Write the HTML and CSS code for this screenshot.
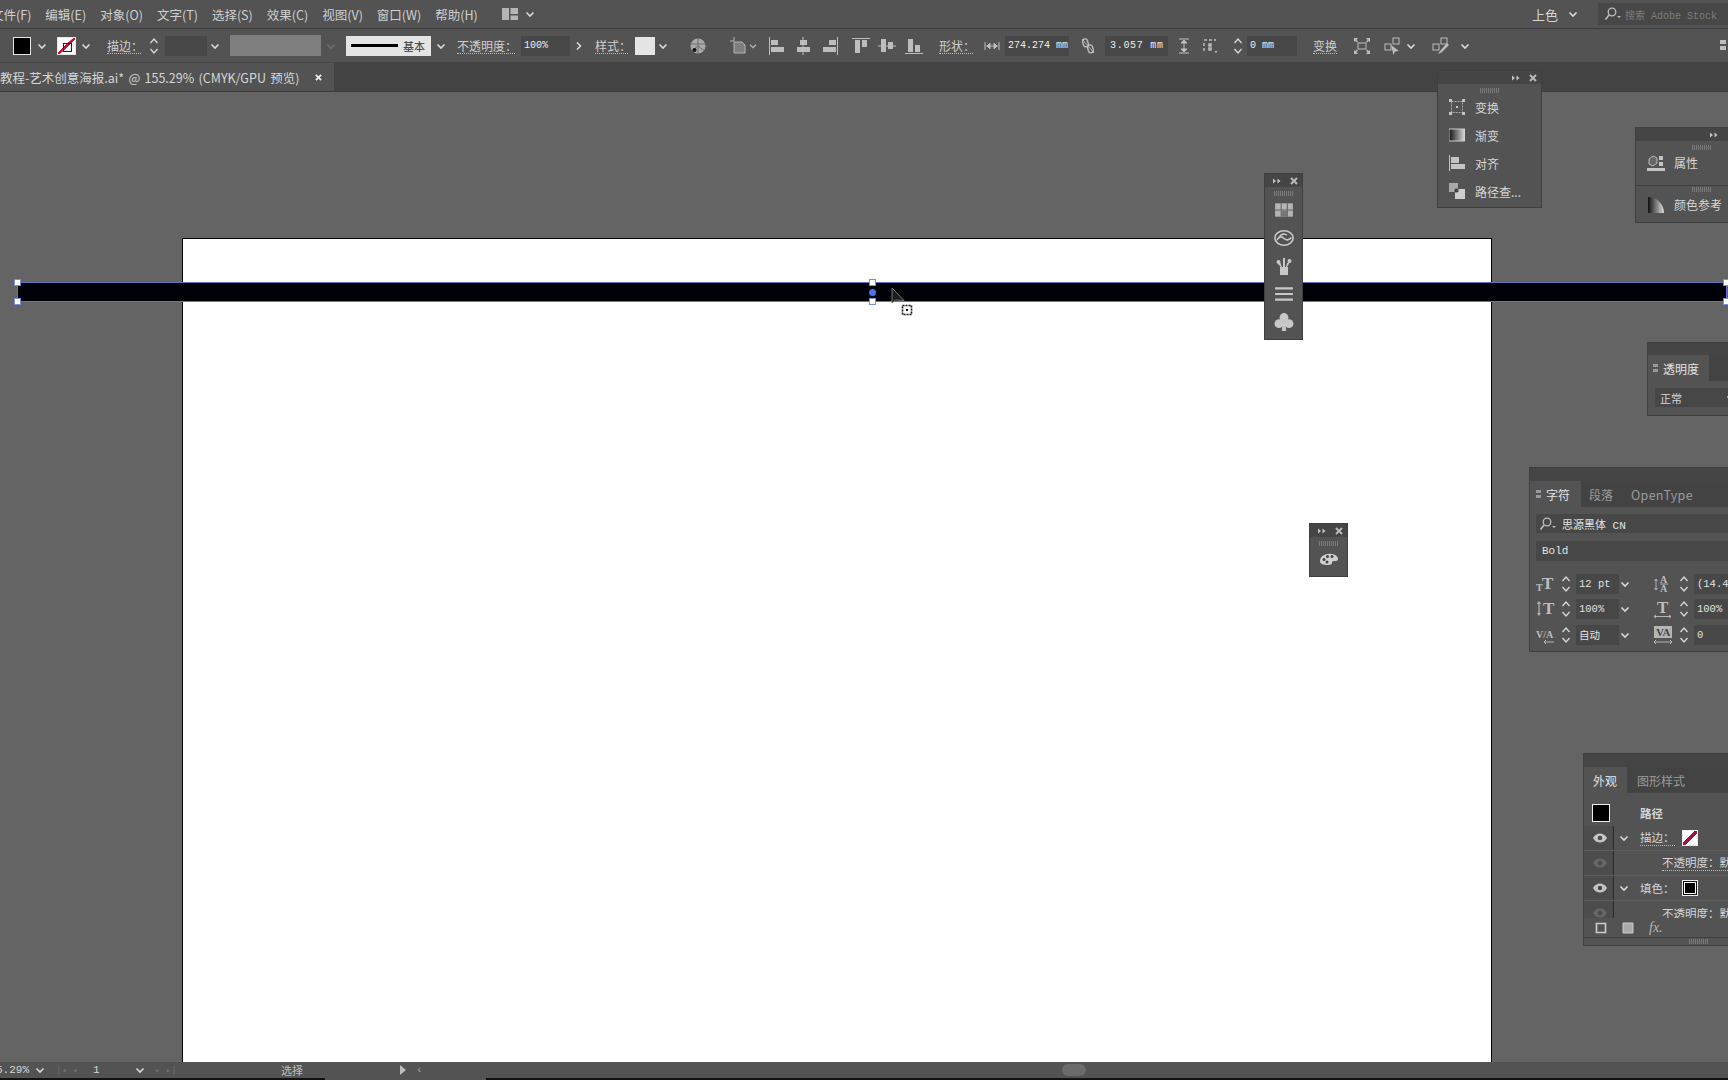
FILE: index.html
```html
<!DOCTYPE html>
<html lang="zh-CN">
  <head>
    <meta charset="UTF-8">
    <title>教程-艺术创意海报.ai</title>
    <link rel="stylesheet" href="styles.css">
  </head>
  <body>
    <svg class="sprite" aria-hidden="true">
      <defs>
        <linearGradient id="grad-h"><stop offset="0" stop-color="#111"/><stop offset="1" stop-color="#ddd"/></linearGradient>
        <symbol id="chev" viewBox="0 0 12 12"><path d="M2.5 4.5 6 8l3.5-3.5" fill="none" stroke="currentColor" stroke-width="1.6"/></symbol>
        <symbol id="step" viewBox="0 0 12 20"><path d="M2.5 7 6 3l3.500 4M2.500 13 6 17l3.500-4" fill="none" stroke="currentColor" stroke-width="1.300"/></symbol>
        <symbol id="collapse" viewBox="0 0 10 8"><path d="M1 1.500 4 4 1 6.500zM5.500 1.500 8.500 4l-3 2.500z" fill="currentColor"/></symbol>
        <symbol id="close" viewBox="0 0 8 8"><path d="M1 1l6 6M7 1 1 7" stroke="currentColor" stroke-width="2"/></symbol>
        <symbol id="align-l" viewBox="0 0 18 18"><path d="M1 0h1v18H1zM3 3h7v5H3zM3 10h13v5H3z" fill="currentColor"/></symbol>
        <symbol id="align-c" viewBox="0 0 18 18"><path d="M8.500 0h1v18h-1zM6 3h7v5H6zM3 10h13v5H3z" fill="currentColor"/></symbol>
        <symbol id="align-r" viewBox="0 0 18 18"><path d="M16 0h1v18h-1zM8 3h7v5H8zM2 10h13v5H2z" fill="currentColor"/></symbol>
        <symbol id="align-t" viewBox="0 0 18 18"><path d="M0 1h18v1H0zM3 3h5v13H3zM10 3h5v7h-5z" fill="currentColor"/></symbol>
        <symbol id="align-m" viewBox="0 0 18 18"><path d="M0 8.500h18v1H0zM3 2h5v13H3zM10 5h5v7h-5z" fill="currentColor"/></symbol>
        <symbol id="align-b" viewBox="0 0 18 18"><path d="M0 16h18v1H0zM3 2h5v13H3zM10 8h5v7h-5z" fill="currentColor"/></symbol>
        <symbol id="eye" viewBox="0 0 14 10"><path d="M0 5c3-6 11-6 14 0-3 6-11 6-14 0z" fill="currentColor"/><circle cx="7" cy="5" r="2.300" fill="#4a4a4a"/></symbol>
        <symbol id="lens" viewBox="0 0 18 14"><circle cx="8" cy="5" r="3.800" fill="none" stroke="currentColor" stroke-width="1.300"/><path d="M5 8 1.500 12.500" stroke="currentColor" stroke-width="1.600"/><path d="M13 9h4l-2 2z" fill="currentColor"/></symbol>
      </defs>
    </svg>

    <div class="app">
      <header class="menubar">
        <nav class="menu">
          <span>文件(F)</span><span>编辑(E)</span><span>对象(O)</span><span>文字(T)</span><span>选择(S)</span>
          <span>效果(C)</span><span>视图(V)</span><span>窗口(W)</span><span>帮助(H)</span>
        </nav>
        <svg class="layout-icon" viewBox="0 0 16 12"><path d="M0 0h7v12H0zM8.500 0H16v6H8.500zM8.500 7.500H16V12H8.500z" fill="#b5b5b5"/></svg>
        <svg class="chev layout-chev"><use href="#chev"/></svg>
        <div class="workspace-switch">
          <span>上色</span>
          <svg class="chev"><use href="#chev"/></svg>
        </div>
        <div class="stock-search">
          <svg class="lens"><use href="#lens"/></svg>
          <span>搜索 Adobe Stock</span>
        </div>
      </header>

      <div class="controlbar">
        <span class="swatch swatch-fill"></span>
        <svg class="chev ml5"><use href="#chev"/></svg>
        <span class="swatch swatch-none ml9"></span>
        <svg class="chev ml4"><use href="#chev"/></svg>
        <span class="label w34 ml15">描边：</span>
        <svg class="step ml7"><use href="#step"/></svg>
        <span class="field w42 ml5"></span>
        <svg class="chev ml2"><use href="#chev"/></svg>
        <span class="gray-box ml9"></span>
        <svg class="chev chev-dim ml4"><use href="#chev"/></svg>
        <span class="stroke-pref ml9"><i></i>基本</span>
        <svg class="chev ml4"><use href="#chev"/></svg>
        <span class="label w58 ml10">不透明度：</span>
        <span class="field w49 ml6">100%</span>
        <svg class="arrow ml3" viewBox="0 0 12 12"><path d="M4 2.500 7.500 6 4 9.500" fill="none" stroke="currentColor" stroke-width="1.500"/></svg>
        <span class="label w33 ml10">样式：</span>
        <span class="swatch swatch-style ml7"></span>
        <svg class="chev ml2"><use href="#chev"/></svg>
        <svg class="ico ml20" viewBox="0 0 18 18"><circle cx="9" cy="9" r="7.500" fill="#a9a9a9"/><path d="M9 1.500V9L3 13.500M9 9l6 4.500M2 7h14M9 9v7" stroke="#6d6d6d" fill="none"/><circle cx="5.500" cy="13" r="2" fill="#111"/></svg>
        <svg class="ico ml23" viewBox="0 0 18 18"><path d="M4 5h8l3 3v8H4z" fill="#7e7e7e" stroke="#b5b5b5"/><path d="M4 0v4M0 4h4" stroke="#b5b5b5"/></svg>
        <svg class="chev chev-small"><use href="#chev"/></svg>
        <svg class="ico ml10"><use href="#align-l"/></svg>
        <svg class="ico ml8"><use href="#align-c"/></svg>
        <svg class="ico ml9"><use href="#align-r"/></svg>
        <svg class="ico ml13"><use href="#align-t"/></svg>
        <svg class="ico ml8"><use href="#align-m"/></svg>
        <svg class="ico ml9"><use href="#align-b"/></svg>
        <span class="label w34 ml16">形状：</span>
        <svg class="ico-sm ml11" viewBox="0 0 16 16"><path d="M1 4v8M15 4v8M2 8h12M3 8l3-3v6zM13 8l-3-3v6z" fill="currentColor" stroke="currentColor"/></svg>
        <span class="field w64 ml5">274.274 mm</span>
        <svg class="ico-sm ml11" viewBox="0 0 16 16"><rect x="3" y="1" width="5" height="8" rx="2.500" fill="none" stroke="currentColor" stroke-width="1.400" transform="rotate(-15 5 5)"/><rect x="8" y="7" width="5" height="8" rx="2.500" fill="none" stroke="currentColor" stroke-width="1.400" transform="rotate(-15 10 11)"/><path d="M2 1l12 14" stroke="currentColor"/></svg>
        <span class="field field-wide w63 ml9">3.057 mm</span>
        <svg class="ico-sm ml8" viewBox="0 0 16 16"><path d="M3 1h10M3 15h10M8 2v12M8 2 5 5h6zM8 14l-3-3h6z" fill="currentColor" stroke="currentColor"/></svg>
        <svg class="ico-sm ml10" viewBox="0 0 16 16"><path d="M2 2h3M7 2h3M12 2h2M2 5v3M2 10v3M7 6h2v2H7zM7 10h2v2H7z" stroke="currentColor" fill="none" stroke-width="1.500"/><path d="M13 13h2v1.500h-2z" fill="currentColor"/></svg>
        <svg class="step ml14"><use href="#step"/></svg>
        <span class="field w50 ml3">0 mm</span>
        <span class="label w24 ml16">变换</span>
        <svg class="ico ml16" viewBox="0 0 18 18"><rect x="5" y="6" width="8" height="6" fill="none" stroke="currentColor"/><path d="M1 1h4L3.500 3 5 4.500 4 5.500 2.500 4 1 5zM17 1h-4l1.500 2L13 4.500l1 1L15.500 4 17 5zM1 17h4l-1.500-2L5 13.500l-1-1L2.500 14 1 13zM17 17h-4l1.500-2-1.500-1.500 1-1 1.500 1.500 1.500-1z" fill="currentColor"/></svg>
        <svg class="ico ml13" viewBox="0 0 18 18"><rect x="1" y="7" width="6" height="6" fill="none" stroke="currentColor"/><rect x="9" y="1" width="6" height="6" fill="none" stroke="currentColor"/><path d="M7 8l8 6-4 .5-1.500 3.500z" fill="currentColor"/></svg>
        <svg class="chev ml3"><use href="#chev"/></svg>
        <svg class="ico ml15" viewBox="0 0 18 18"><rect x="1" y="7" width="6" height="6" fill="none" stroke="currentColor"/><rect x="9" y="1" width="6" height="6" fill="none" stroke="currentColor"/><path d="M15 6 8 14l-2 3 3.500-1.500L17 8z" fill="currentColor"/></svg>
        <svg class="chev ml9"><use href="#chev"/></svg>
        <svg class="grip-end" viewBox="0 0 8 16"><path d="M0 2h6v4H0zM0 8h6v4H0z" fill="currentColor"/></svg>
      </div>

      <div class="tabbar">
        <div class="doc-tab">
          <span>教程-艺术创意海报.ai* @ 155.29% (CMYK/GPU 预览)</span>
          <svg class="doc-close"><use href="#close"/></svg>
        </div>
      </div>

      <main class="canvas">
        <div class="artboard"></div>
        <div class="shape">
          <b class="handle h-tl"></b><b class="handle h-bl"></b>
          <b class="handle h-tc"></b><b class="center-dot"></b><b class="handle h-bc"></b>
          <b class="handle h-tr"></b><b class="handle h-br"></b>
        </div>
        <svg class="cursor" viewBox="0 0 26 30">
          <path d="M1 1v15l3.500-3 8.500.5z" fill="#1c1c1c" stroke="#777"/>
          <path d="M11.500 18.500h9v9h-9z" fill="none" stroke="#111" stroke-width="1.600" stroke-dasharray="2 1"/>
          <path d="M15 22h2v2h-2z" fill="#111"/>
        </svg>
      </main>

      <aside class="panel panel-dock-transform">
        <div class="panel-title"><svg class="collapse"><use href="#collapse"/></svg><svg class="close"><use href="#close"/></svg></div>
        <div class="grip"></div>
        <div class="named-row">
          <svg class="named-icon" viewBox="0 0 16 16"><path d="M2.500 2.500h11v11h-11z" fill="none" stroke="#aaa" stroke-dasharray="2 1"/><path d="M0 0h3v3H0zM13 0h3v3h-3zM0 13h3v3H0zM13 13h3v3h-3zM7 7h2v2H7z" fill="#c4c4c4"/></svg>
          <span>变换</span>
        </div>
        <div class="named-row">
          <svg class="named-icon" viewBox="0 0 16 16"><rect y="2" width="16" height="12" fill="url(#grad-h)" stroke="#ccc"/></svg>
          <span>渐变</span>
        </div>
        <div class="named-row">
          <svg class="named-icon" viewBox="0 0 16 16"><path d="M0 0h1v16H0zM2 2h8v6H2zM2 9h14v5H2z" fill="#c4c4c4"/></svg>
          <span>对齐</span>
        </div>
        <div class="named-row">
          <svg class="named-icon" viewBox="0 0 16 16"><path d="M0 0h9v9H0z" fill="#a8a8a8"/><path d="M6 6h10v10H6z" fill="#cdcdcd"/><path d="M6 6h3v3H6z" fill="#555" stroke="#222" stroke-width=".6"/></svg>
          <span>路径查...</span>
        </div>
      </aside>

      <aside class="panel panel-icons">
        <div class="panel-title"><svg class="collapse"><use href="#collapse"/></svg><svg class="close"><use href="#close"/></svg></div>
        <div class="grip"></div>
        <div class="icon-stack">
          <svg viewBox="0 0 18 18"><path d="M1 3h16v12H1z" fill="#b5b5b5"/><path d="M1 9h16M6.500 3v12M12 3v12" stroke="#666"/><path d="M7 9.500h5V15H7z" fill="#777"/></svg>
          <svg viewBox="0 0 22 18"><ellipse cx="11" cy="9" rx="10" ry="8" fill="none" stroke="#c8c8c8" stroke-width="1.800"/><path d="M3.500 11c2-4 5-4 7.500-1.500s6 2 8-1M6 8c1.500-3.500 6-4.500 8-2" fill="none" stroke="#c8c8c8" stroke-width="1.800"/></svg>
          <svg viewBox="0 0 18 20"><path d="M5 11h8v8H5zM3 8l3 3h1L5 6zM15 6l-3 5h-1l1-4zM8 2h2v9H8z" fill="#c8c8c8"/><circle cx="3.500" cy="6" r="2" fill="#c8c8c8"/><circle cx="14.500" cy="5" r="2" fill="#c8c8c8"/></svg>
          <svg viewBox="0 0 18 18"><path d="M1 3h16v2H1zM1 8h16v2H1zM1 13h16v2H1z" fill="#c8c8c8"/></svg>
          <svg viewBox="0 0 18 18"><circle cx="9" cy="5" r="4" fill="#c8c8c8"/><circle cx="4.500" cy="10.500" r="4" fill="#c8c8c8"/><circle cx="13.500" cy="10.500" r="4" fill="#c8c8c8"/><path d="M8 9h2l1 8H7z" fill="#c8c8c8"/></svg>
        </div>
      </aside>

      <aside class="panel panel-palette">
        <div class="panel-title"><svg class="collapse"><use href="#collapse"/></svg><svg class="close"><use href="#close"/></svg></div>
        <div class="grip"></div>
        <svg class="palette-icon" viewBox="0 0 20 14"><path d="M1 9c0-5 6-8 12-7 4 .5 6 3 6 5s-2 2-4 2-2 1-2 2-1 2-4 2c-5 0-8-1-8-4z" fill="#cfcfcf"/><circle cx="5" cy="7.500" r="1.500" fill="#444"/><circle cx="8.500" cy="4.500" r="1.500" fill="#444"/><circle cx="13" cy="4.500" r="1.500" fill="#444"/><circle cx="8" cy="10" r="1.500" fill="#444"/></svg>
      </aside>

      <aside class="panel panel-side panel-props">
        <div class="panel-title"><svg class="collapse collapse-side"><use href="#collapse"/></svg></div>
        <div class="side-row">
          <div class="grip"></div>
          <div class="side-item">
            <svg class="side-icon" viewBox="0 0 18 16"><path d="M2 4l4-3 4 2v5l-4 3-4-2z" fill="#666" stroke="#bbb"/><path d="M12 1h4v4h-4zM12 7h4v4h-4zM0 13h18v3H0z" fill="#c4c4c4"/></svg>
            <span>属性</span>
          </div>
        </div>
        <div class="side-row">
          <div class="grip"></div>
          <div class="side-item">
            <svg class="side-icon" viewBox="0 0 18 16"><path d="M1 0v16h16C17 7 10 0 1 0z" fill="url(#grad-h)"/></svg>
            <span>颜色参考</span>
          </div>
        </div>
      </aside>

      <aside class="panel panel-side panel-opacity">
        <div class="panel-title"></div>
        <div class="panel-tabs">
          <div class="panel-tab tab-opacity"><i class="tab-arrows"></i>透明度</div>
        </div>
        <div class="blend-select">正常<svg class="chev"><use href="#chev"/></svg></div>
      </aside>

      <aside class="panel panel-side panel-char">
        <div class="panel-title"></div>
        <div class="panel-tabs">
          <div class="panel-tab tab-char"><i class="tab-arrows"></i>字符</div>
          <div class="tab-off tab-para">段落</div>
          <div class="tab-off tab-type">OpenType</div>
        </div>
        <div class="font-field font-name"><svg class="lens"><use href="#lens"/></svg>思源黑体 CN</div>
        <div class="font-field font-style">Bold</div>
        <div class="char-grid">
          <svg class="char-icon" viewBox="0 0 20 20"><text x="0" y="17" class="ct ct-small">T</text><text x="6" y="15" class="ct">T</text></svg>
          <svg class="step"><use href="#step"/></svg>
          <span class="char-input">12 pt</span>
          <svg class="chev"><use href="#chev"/></svg>
          <svg class="char-icon char-icon2" viewBox="0 0 20 20"><text x="7" y="9" class="ct ct-small">A</text><text x="7" y="18" class="ct ct-small">A</text><path d="M3 5v11M1.500 7 3 5l1.500 2M1.500 14 3 16l1.500-2M7 10h8" stroke="#b5b5b5" fill="none"/></svg>
          <svg class="step"><use href="#step"/></svg>
          <span class="char-input">(14.4 pt)</span>

          <svg class="char-icon" viewBox="0 0 20 20"><path d="M3 3v13M1.500 5 3 3l1.500 2M1.500 14 3 16l1.500-2" stroke="#b5b5b5" fill="none" stroke-width="1.200"/><text x="7" y="15" class="ct">T</text></svg>
          <svg class="step"><use href="#step"/></svg>
          <span class="char-input">100%</span>
          <svg class="chev"><use href="#chev"/></svg>
          <svg class="char-icon char-icon2" viewBox="0 0 20 20"><text x="4" y="14" class="ct">T</text><path d="M1 17.500h17M3 16l-2 1.500L3 19M16 16l2 1.500L16 19" stroke="#b5b5b5" fill="none"/></svg>
          <svg class="step"><use href="#step"/></svg>
          <span class="char-input">100%</span>

          <svg class="char-icon" viewBox="0 0 20 20"><text x="0" y="13" class="ct ct-small">V/A</text><path d="M8 17h10M10 15l-2 2 2 2" stroke="#b5b5b5" fill="none"/></svg>
          <svg class="step"><use href="#step"/></svg>
          <span class="char-input">自动</span>
          <svg class="chev"><use href="#chev"/></svg>
          <svg class="char-icon char-icon2" viewBox="0 0 20 20"><path d="M1 1h18v12H1z" fill="#b5b5b5"/><text x="3" y="11" class="ct ct-mid ct-dark">VA</text><path d="M1 17h18M3 15l-2 2 2 2M17 15l2 2-2 2" stroke="#b5b5b5" fill="none"/></svg>
          <svg class="step"><use href="#step"/></svg>
          <span class="char-input">0</span>
        </div>
      </aside>

      <aside class="panel panel-side panel-look">
        <div class="panel-title"></div>
        <div class="panel-tabs">
          <div class="panel-tab tab-look">外观</div>
          <div class="tab-off">图形样式</div>
        </div>
        <div class="look-list">
          <div class="look-row look-head">
            <span class="look-swatch"></span>
            <b>路径</b>
          </div>
          <div class="look-row">
            <svg class="eye"><use href="#eye"/></svg>
            <svg class="chev"><use href="#chev"/></svg>
            <span class="look-label dotted">描边：</span>
            <span class="mini-swatch mini-none"></span>
          </div>
          <div class="look-row">
            <svg class="eye eye-dim"><use href="#eye"/></svg>
            <span class="look-sub dotted">不透明度：默认值</span>
          </div>
          <div class="look-row">
            <svg class="eye"><use href="#eye"/></svg>
            <svg class="chev"><use href="#chev"/></svg>
            <span class="look-label">填色：</span>
            <span class="mini-swatch mini-black"></span>
          </div>
          <div class="look-row">
            <svg class="eye eye-dim"><use href="#eye"/></svg>
            <span class="look-sub">不透明度：默认值</span>
          </div>
        </div>
        <div class="look-foot">
          <svg viewBox="0 0 12 12"><path d="M1.500 1.500h9v9h-9z" fill="none" stroke="#ccc" stroke-width="1.600"/></svg>
          <svg viewBox="0 0 12 12"><path d="M1 1h10v10H1z" fill="#aaa" stroke="#ccc"/></svg>
          <em>fx.</em>
        </div>
        <div class="look-grip"><div class="grip"></div></div>
      </aside>

      <footer class="statusbar">
        <span class="zoom-val">5.29%</span>
        <svg class="chev"><use href="#chev"/></svg>
        <span class="nav-dim nav-first">|◂ ◂</span>
        <span class="page-num">1</span>
        <svg class="chev"><use href="#chev"/></svg>
        <span class="nav-dim nav-last">▸ ▸|</span>
        <span class="status-tool">选择</span>
        <span class="status-play"></span>
        <span class="status-back">‹</span>
        <div class="hscroll"><span class="thumb"></span></div>
      </footer>
      <div class="taskbar-edge"><span></span></div>
    </div>
  </body>
</html>
```

FILE: styles.css
```css
* {
  box-sizing: border-box;
}
html, body {
  margin: 0;
  height: 100%;
  overflow: hidden;
}
body {
  font-family: "Noto Sans CJK SC", "Noto Sans", sans-serif;
  font-size: 12px;
  color: #d6d6d6;
  background: #646464;
}
.sprite {
  position: absolute;
  width: 0;
  height: 0;
}
.app {
  position: relative;
  display: flex;
  flex-direction: column;
  width: 1728px;
  height: 1080px;
  overflow: hidden;
}

/* menu bar */
.menubar {
  display: flex;
  align-items: center;
  height: 29px;
  flex: none;
  background: #535353;
  border-bottom: 1px solid #3c3c3c;
}
.menu {
  display: flex;
  gap: 14px;
  margin-left: -9px;
  font-size: 12.500px;
  color: #cfcfcf;
}
.layout-icon {
  width: 16px;
  height: 12px;
  margin-left: 24px;
}
.layout-chev {
  margin-left: 6px;
}
.workspace-switch {
  display: flex;
  align-items: center;
  gap: 9px;
  margin-left: auto;
  font-size: 13px;
}
.stock-search {
  display: flex;
  align-items: center;
  width: 130px;
  height: 22px;
  margin-left: 19px;
  padding-left: 6px;
  background: #474747;
  font-family: "Liberation Mono", "Noto Sans CJK SC", monospace;
  font-size: 10px;
  color: #7c7c7c;
}
.lens {
  width: 18px;
  height: 14px;
  flex: none;
  margin-right: 3px;
  color: #bdbdbd;
}
.chev {
  width: 12px;
  height: 12px;
  flex: none;
  color: #d8d8d8;
}
.chev-dim {
  color: #6e6e6e;
}
.chev-small {
  width: 10px;
  height: 10px;
  color: #b5b5b5;
}

/* control bar */
.controlbar {
  display: flex;
  align-items: center;
  height: 34px;
  flex: none;
  padding-left: 13px;
  background: #535353;
  border-bottom: 1px solid #464646;
  color: #bdbdbd;
}
.swatch {
  position: relative;
  width: 18px;
  height: 18px;
  flex: none;
  border: 1px solid #e6e6e6;
}
.swatch-fill {
  background: #000;
}
.swatch-none {
  width: 19px;
  background: linear-gradient(to bottom right, #fff 44%, #c2143a 45%, #c2143a 55%, #fff 56%);
}
.swatch-none::after {
  content: "";
  position: absolute;
  left: 5px;
  top: 5px;
  width: 7px;
  height: 7px;
  border: 1px solid #222;
}
.swatch-style {
  width: 20px;
  background: #e4e4e4;
}
.label {
  flex: none;
  color: #cfcfcf;
  font-size: 12px;
  line-height: 15px;
  white-space: nowrap;
  border-bottom: 1px dotted #bbb;
}
.field {
  display: flex;
  align-items: center;
  height: 20px;
  flex: none;
  padding-left: 3px;
  background: #474747;
  color: #eee;
  font-family: "Liberation Mono", monospace;
  font-size: 10px;
  white-space: nowrap;
}
.field-wide {
  padding-left: 5px;
  letter-spacing: .7px;
}
.step {
  width: 12px;
  height: 20px;
  flex: none;
  color: #d8d8d8;
}
.arrow {
  width: 12px;
  height: 12px;
  flex: none;
  color: #ddd;
}
.gray-box {
  width: 91px;
  height: 21px;
  flex: none;
  background: #7e7e7e;
}
.stroke-pref {
  display: flex;
  align-items: center;
  width: 85px;
  height: 20px;
  flex: none;
  padding-left: 5px;
  background: #e4e4e4;
  color: #333;
  font-size: 11px;
}
.stroke-pref i {
  width: 47px;
  height: 2.500px;
  margin-right: 5px;
  background: #000;
}
.ico {
  width: 18px;
  height: 18px;
  flex: none;
  color: #bdbdbd;
}
.ico-sm {
  width: 16px;
  height: 16px;
  flex: none;
  color: #bdbdbd;
}
.grip-end {
  width: 8px;
  height: 16px;
  flex: none;
  margin-left: auto;
  color: #bdbdbd;
}

.ml2 { margin-left: 2px; }
.ml3 { margin-left: 3px; }
.ml4 { margin-left: 4px; }
.ml5 { margin-left: 5px; }
.ml6 { margin-left: 6px; }
.ml7 { margin-left: 7px; }
.ml8 { margin-left: 8px; }
.ml9 { margin-left: 9px; }
.ml10 { margin-left: 10px; }
.ml11 { margin-left: 11px; }
.ml13 { margin-left: 13px; }
.ml14 { margin-left: 14px; }
.ml15 { margin-left: 15px; }
.ml16 { margin-left: 16px; }
.ml20 { margin-left: 20px; }
.ml23 { margin-left: 23px; }
.w24 { width: 24px; }
.w33 { width: 33px; }
.w34 { width: 34px; }
.w42 { width: 42px; }
.w49 { width: 49px; }
.w50 { width: 50px; }
.w58 { width: 58px; }
.w63 { width: 63px; }
.w64 { width: 64px; }

/* document tabs */
.tabbar {
  display: flex;
  height: 29px;
  flex: none;
  background: #434343;
  border-bottom: 1px solid #3c3c3c;
}
.doc-tab {
  display: flex;
  align-items: center;
  width: 334px;
  background: #535353;
  font-size: 12.500px;
  word-spacing: 1.500px;
  white-space: nowrap;
  color: #d6d6d6;
}
.doc-close {
  width: 7px;
  height: 7px;
  flex: none;
  margin-left: 16px;
  color: #eee;
}

/* canvas */
.canvas {
  position: relative;
  flex: 1;
  overflow: hidden;
  background: #646464;
}
.artboard {
  position: absolute;
  left: 182px;
  top: 146px;
  width: 1310px;
  height: 900px;
  background: #fff;
  border: 1px solid #000;
}
.shape {
  position: absolute;
  left: 17px;
  top: 190px;
  width: 1710px;
  height: 20px;
  background: #000008;
  border: 1px solid #6670c0;
}
.handle {
  position: absolute;
  width: 7px;
  height: 7px;
  background: #fff;
  border: 1px solid #7d8ee0;
}
.h-tl { left: -4px; top: -4px; }
.h-bl { left: -4px; bottom: -4px; }
.h-tc { left: 851px; top: -4px; }
.h-bc { left: 851px; bottom: -4px; }
.h-tr { right: -4px; top: -4px; }
.h-br { right: -4px; bottom: -4px; }
.center-dot {
  position: absolute;
  left: 851px;
  top: 6px;
  width: 7px;
  height: 7px;
  border-radius: 50%;
  background: #4a73e8;
}
.cursor {
  position: absolute;
  left: 891px;
  top: 195px;
  width: 26px;
  height: 30px;
}

/* floating panels */
.panel {
  position: absolute;
  overflow: hidden;
  background: #535353;
  border: 1px solid #3f3f3f;
  z-index: 2;
}
.panel-title {
  display: flex;
  align-items: center;
  justify-content: flex-end;
  gap: 8px;
  height: 13px;
  padding-right: 4px;
  background: #454545;
}
.collapse {
  width: 10px;
  height: 8px;
  color: #c4c4c4;
}
.close {
  width: 8px;
  height: 8px;
  color: #b8b8b8;
}
.grip {
  width: 20px;
  height: 5px;
  margin: 4px auto 0;
  background: repeating-linear-gradient(to right, #7a7a7a 0 1px, transparent 1px 2px);
}
.panel-dock-transform {
  left: 1437px;
  top: 70px;
  width: 105px;
  height: 138px;
}
.named-row {
  display: flex;
  align-items: center;
  gap: 10px;
  height: 28px;
  padding-left: 11px;
}
.named-icon {
  width: 16px;
  height: 16px;
  flex: none;
}
.panel-icons {
  left: 1264px;
  top: 173px;
  width: 39px;
  height: 167px;
}
.icon-stack {
  display: flex;
  flex-direction: column;
  align-items: center;
  gap: 8px;
  margin-top: 4px;
}
.icon-stack svg {
  width: 20px;
  height: 20px;
}
.panel-palette {
  left: 1309px;
  top: 523px;
  width: 39px;
  height: 54px;
}
.palette-icon {
  display: block;
  width: 20px;
  height: 14px;
  margin: 6px auto 0;
}

/* docked panels run past the right edge */
.panel-side {
  right: -40px;
}
.panel-props {
  left: 1635px;
  top: 127px;
  height: 96px;
}
.collapse-side {
  margin-right: 44px;
}
.side-row {
  height: 41px;
  border-bottom: 1px solid #3f3f3f;
}
.side-row + .side-row {
  margin-top: -3px;
}
.side-item {
  display: flex;
  align-items: center;
  gap: 9px;
  height: 22px;
  padding: 3px 0 0 11px;
}
.side-icon {
  width: 18px;
  height: 16px;
  flex: none;
}
.panel-tabs {
  display: flex;
  align-items: center;
  height: 26px;
  background: #434343;
}
.panel-tab {
  display: flex;
  align-items: center;
  height: 100%;
  background: #535353;
  color: #e2e2e2;
}
.tab-off {
  color: #9a9a9a;
  margin-left: 16px;
}
.tab-type {
  margin-left: 18px;
  font-size: 12.500px;
  letter-spacing: .3px;
}
.tab-arrows {
  width: 5px;
  height: 8px;
  margin-right: 5px;
  border-top: 3px solid #999;
  border-bottom: 3px solid #999;
}
.panel-opacity {
  left: 1647px;
  top: 342px;
  height: 74px;
}
.panel-opacity .panel-title {
  height: 12px;
}
.tab-opacity {
  width: 61px;
  padding-left: 5px;
}
.blend-select {
  display: flex;
  align-items: center;
  justify-content: space-between;
  width: 90px;
  height: 19px;
  margin: 7px 0 0 7px;
  padding: 0 8px 0 5px;
  background: #474747;
  font-size: 11px;
}
.panel-char {
  left: 1529px;
  top: 467px;
  height: 185px;
}
.tab-char {
  width: 51px;
  padding-left: 6px;
}
.tab-para {
  margin-left: 8px;
}
.font-field {
  display: flex;
  align-items: center;
  height: 19px;
  margin-left: 6px;
  background: #474747;
  font-family: "Liberation Mono", "Noto Sans CJK SC", monospace;
  font-size: 11px;
  color: #e2e2e2;
}
.font-name {
  margin-top: 7px;
  padding-left: 3px;
}
.font-name .lens {
  margin-right: 5px;
}
.font-style {
  margin-top: 8px;
  padding-left: 6px;
  height: 20px;
}
.char-grid {
  display: grid;
  grid-template-columns: 24px 16px 43px 17px 42px 16px 1fr;
  grid-auto-rows: 25.500px;
  align-items: center;
  margin: 10px 0 0 6px;
}
.char-icon {
  width: 20px;
  height: 20px;
}
.char-icon2 {
  margin-left: 17px;
}
.ct {
  font-family: "Liberation Serif", serif;
  font-weight: bold;
  font-size: 17px;
  fill: #bdbdbd;
}
.ct-small {
  font-size: 10px;
}
.ct-mid {
  font-size: 11px;
}
.ct-dark {
  fill: #444;
}
.char-input {
  display: flex;
  align-items: center;
  height: 20px;
  padding-left: 3px;
  background: #474747;
  font-family: "Liberation Mono", "Noto Sans CJK SC", monospace;
  font-size: 10.500px;
  color: #e2e2e2;
  white-space: nowrap;
}
.panel-look {
  left: 1583px;
  top: 753px;
  height: 193px;
}
.tab-look {
  width: 43px;
  padding-left: 9px;
}
.tab-look + .tab-off {
  margin-left: 10px;
}
.look-list {
  height: 125px;
  overflow: hidden;
  background: linear-gradient(to right, #4c4c4c 29px, #2a2a2a 29px 30px, #535353 30px);
}
.look-row {
  display: flex;
  align-items: center;
  height: 25px;
  padding-left: 9px;
  border-bottom: 1px solid #5d5d5d;
}
.look-head {
  height: 33px;
  padding: 6px 0 0 8px;
  background: #535353;
  border-bottom: 0;
}
.look-head b {
  margin-left: 30px;
  font-weight: bold;
  font-size: 11.500px;
}
.look-swatch {
  width: 18px;
  height: 18px;
  background: #000;
  border: 1px solid #eee;
}
.eye {
  width: 14px;
  height: 10px;
  flex: none;
  color: #c4c4c4;
}
.eye-dim {
  color: #666;
}
.look-row .chev {
  margin-left: 11px;
}
.look-label {
  margin-left: 10px;
  font-size: 11.500px;
  line-height: 15px;
}
.dotted {
  border-bottom: 1px dotted #bbb;
}
.look-sub {
  flex: none;
  margin-left: 55px;
  font-size: 11.500px;
  line-height: 15px;
  white-space: nowrap;
}
.mini-swatch {
  width: 16px;
  height: 16px;
  margin-left: 7px;
  border: 1px solid #eee;
}
.mini-none {
  background: linear-gradient(to bottom right, #fff 40%, #a5123c 42%, #a5123c 58%, #fff 60%);
}
.mini-black {
  background: #000;
  box-shadow: inset 0 0 0 1px #111, inset 0 0 0 2px #fff;
}
.look-foot {
  display: flex;
  align-items: center;
  gap: 15px;
  height: 19px;
  padding-left: 11px;
}
.look-foot svg {
  width: 12px;
  height: 12px;
}
.look-foot em {
  font-family: "Liberation Serif", serif;
  font-size: 14px;
  color: #b5b5b5;
}
.look-grip {
  height: 8px;
  border-top: 1px solid #3f3f3f;
}
.look-grip .grip {
  margin: 1px 0 0 105px;
}

/* status bar */
.statusbar {
  display: flex;
  align-items: center;
  height: 16px;
  flex: none;
  background: #535353;
  position: relative;
  z-index: 3;
  font-family: "Liberation Mono", "Noto Sans CJK SC", monospace;
  font-size: 11px;
}
.zoom-val {
  width: 38px;
  margin-left: -4px;
}
.nav-dim {
  color: #707070;
  font-size: 9px;
  white-space: nowrap;
}
.nav-first {
  width: 37px;
  margin-left: 10px;
}
.page-num {
  width: 41px;
}
.nav-last {
  width: 50px;
  margin-left: 9px;
}
.status-tool {
  width: 119px;
  margin-left: 76px;
  font-family: "Noto Sans CJK SC", sans-serif;
  color: #bdbdbd;
}
.status-play {
  width: 0;
  height: 0;
  border-left: 6px solid #bdbdbd;
  border-top: 5px solid transparent;
  border-bottom: 5px solid transparent;
}
.status-back {
  margin-left: 10px;
  color: #a5a5a5;
}
.hscroll {
  flex: 1;
  height: 100%;
  display: flex;
  align-items: center;
  padding-left: 639px;
}
.thumb {
  width: 24px;
  height: 12px;
  border-radius: 6px;
  background: #6b6b6b;
}
.taskbar-edge {
  height: 2px;
  flex: none;
  position: relative;
  z-index: 3;
  background: #111;
}
.taskbar-edge span {
  display: block;
  width: 161px;
  height: 2px;
  margin-left: 325px;
  background: #535353;
}
```
